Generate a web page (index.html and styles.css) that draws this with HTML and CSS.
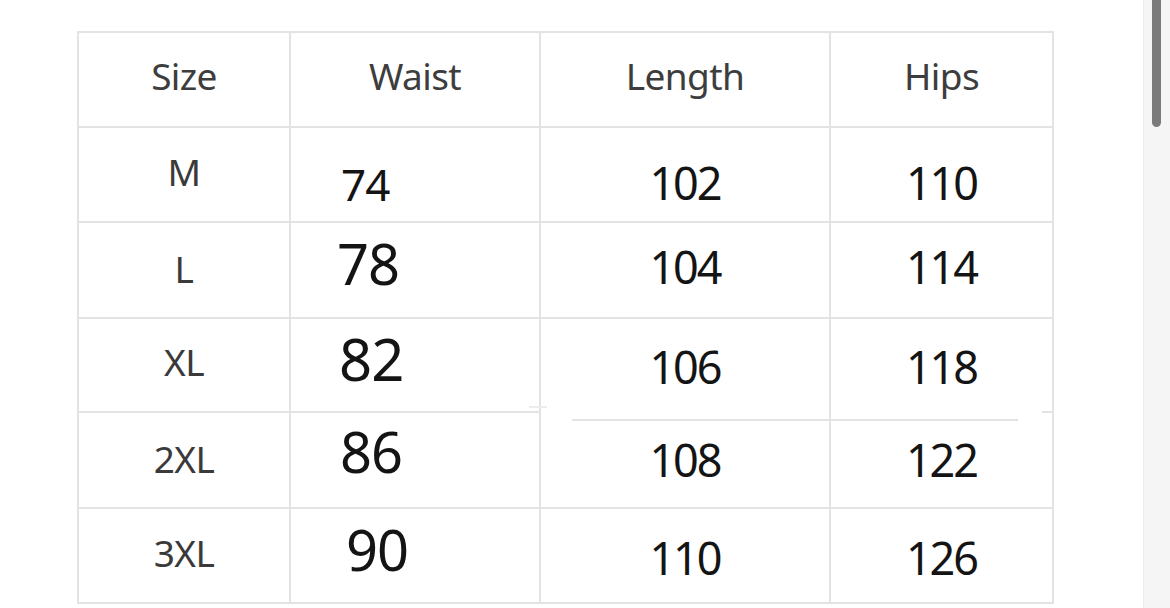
FILE: index.html
```html
<!DOCTYPE html>
<html>
<head>
<meta charset="utf-8">
<link rel="stylesheet" href="styles.css">
</head>
<body>
<div class="page">
  <main class="main">
    <div class="chart">
      <div class="cell head h-size">Size</div>
      <div class="cell head h-waist">Waist</div>
      <div class="cell head h-len">Length</div>
      <div class="cell head h-hip">Hips</div>

      <div class="cell size r1">M</div>
      <div class="cell waist r1">74</div>
      <div class="cell num r1">102</div>
      <div class="cell num r1">110</div>

      <div class="cell size r2">L</div>
      <div class="cell waist r2">78</div>
      <div class="cell num r2">104</div>
      <div class="cell num r2">114</div>

      <div class="cell size r3">XL</div>
      <div class="cell waist r3">82</div>
      <div class="cell num r3">106</div>
      <div class="cell num r3">118</div>

      <div class="cell size r4">2XL</div>
      <div class="cell waist r4">86</div>
      <div class="cell num r4 shifted len-shift">108</div>
      <div class="cell num r4 shifted hip-shift">122</div>

      <div class="cell size r5">3XL</div>
      <div class="cell waist r5">90</div>
      <div class="cell num r5">110</div>
      <div class="cell num r5">126</div>
    </div>
  </main>
  <div class="scrollbar"><div class="thumb"></div></div>
</div>
</body>
</html>
```

FILE: styles.css
```css
html, body {
  margin: 0;
  padding: 0;
  background: #ffffff;
  height: 608px;
  overflow: hidden;
}

.page {
  display: flex;
  height: 608px;
}

.main {
  flex: 1;
  padding: 31px 0 0 77px;
}

.scrollbar {
  width: 27px;
  background: #f5f5f5;
  border-left: 1px solid #ededed;
  box-sizing: border-box;
}

.thumb {
  width: 9px;
  height: 127px;
  margin-left: 8px;
  background: #7b7b7b;
  border-radius: 0 0 5px 5px;
}

.chart {
  display: grid;
  grid-template-columns: 210px 248px 288px 221px;
  grid-template-rows: 93px 93px 94px 92px 94px 93px;
  gap: 2px;
  padding: 2px;
  background: #e3e3e3;
  width: 977px;
  box-sizing: border-box;
}

.cell {
  background: #ffffff;
  display: flex;
  justify-content: center;
  align-items: flex-start;
  font-family: "Noto Sans", "Open Sans", sans-serif;
  line-height: 1;
  box-sizing: border-box;
}

.head {
  font-size: 37px;
  color: #3d3d3d;
  letter-spacing: -0.6px;
  padding-top: 24px;
}

.size {
  font-size: 37px;
  color: #3a3a3a;
  letter-spacing: -0.6px;
}
.size.r1 { padding-top: 25px; }
.size.r2 { padding-top: 27px; }
.size.r3 { padding-top: 24px; }
.size.r4 { padding-top: 27px; }
.size.r5 { padding-top: 25px; }

.num {
  font-size: 45px;
  color: #141414;
  letter-spacing: -2px;
}
.num.r1 { padding-top: 32px; }
.num.r2 { padding-top: 21px; }
.num.r3 { padding-top: 25px; }
.num.r4 { padding-top: 24px; }
.num.r5 { padding-top: 26px; }

.waist {
  justify-content: flex-start;
  color: #141414;
  letter-spacing: -1px;
}
.waist.r1 { font-size: 44px; padding: 34px 0 0 50px; }
.waist.r2 { font-size: 56px; padding: 12px 0 0 46px; }
.waist.r3 { font-size: 58px; padding: 11px 0 0 48px; }
.waist.r4 { font-size: 56px; padding: 10px 0 0 49px; }
.waist.r5 { font-size: 56px; padding: 12px 0 0 55px; }

/* row 4 length/hips: the dividing line above is drawn lower and shorter */
.shifted {
  position: relative;
  margin-top: -2px;
}
.num.r4.shifted { padding-top: 26px; }

.shifted::before {
  content: "";
  position: absolute;
  top: 8px;
  height: 2px;
  background: #e3e3e3;
}
.len-shift::before { left: 31px; right: 0; }
.hip-shift::before { left: 0; width: 187px; }

.hip-shift::after {
  content: "";
  position: absolute;
  top: 0;
  right: 0;
  width: 10px;
  height: 2px;
  background: #e3e3e3;
}
.len-shift::after {
  content: "";
  position: absolute;
  top: -5px;
  left: -12px;
  width: 18px;
  height: 2px;
  background: #ececec;
}
```
